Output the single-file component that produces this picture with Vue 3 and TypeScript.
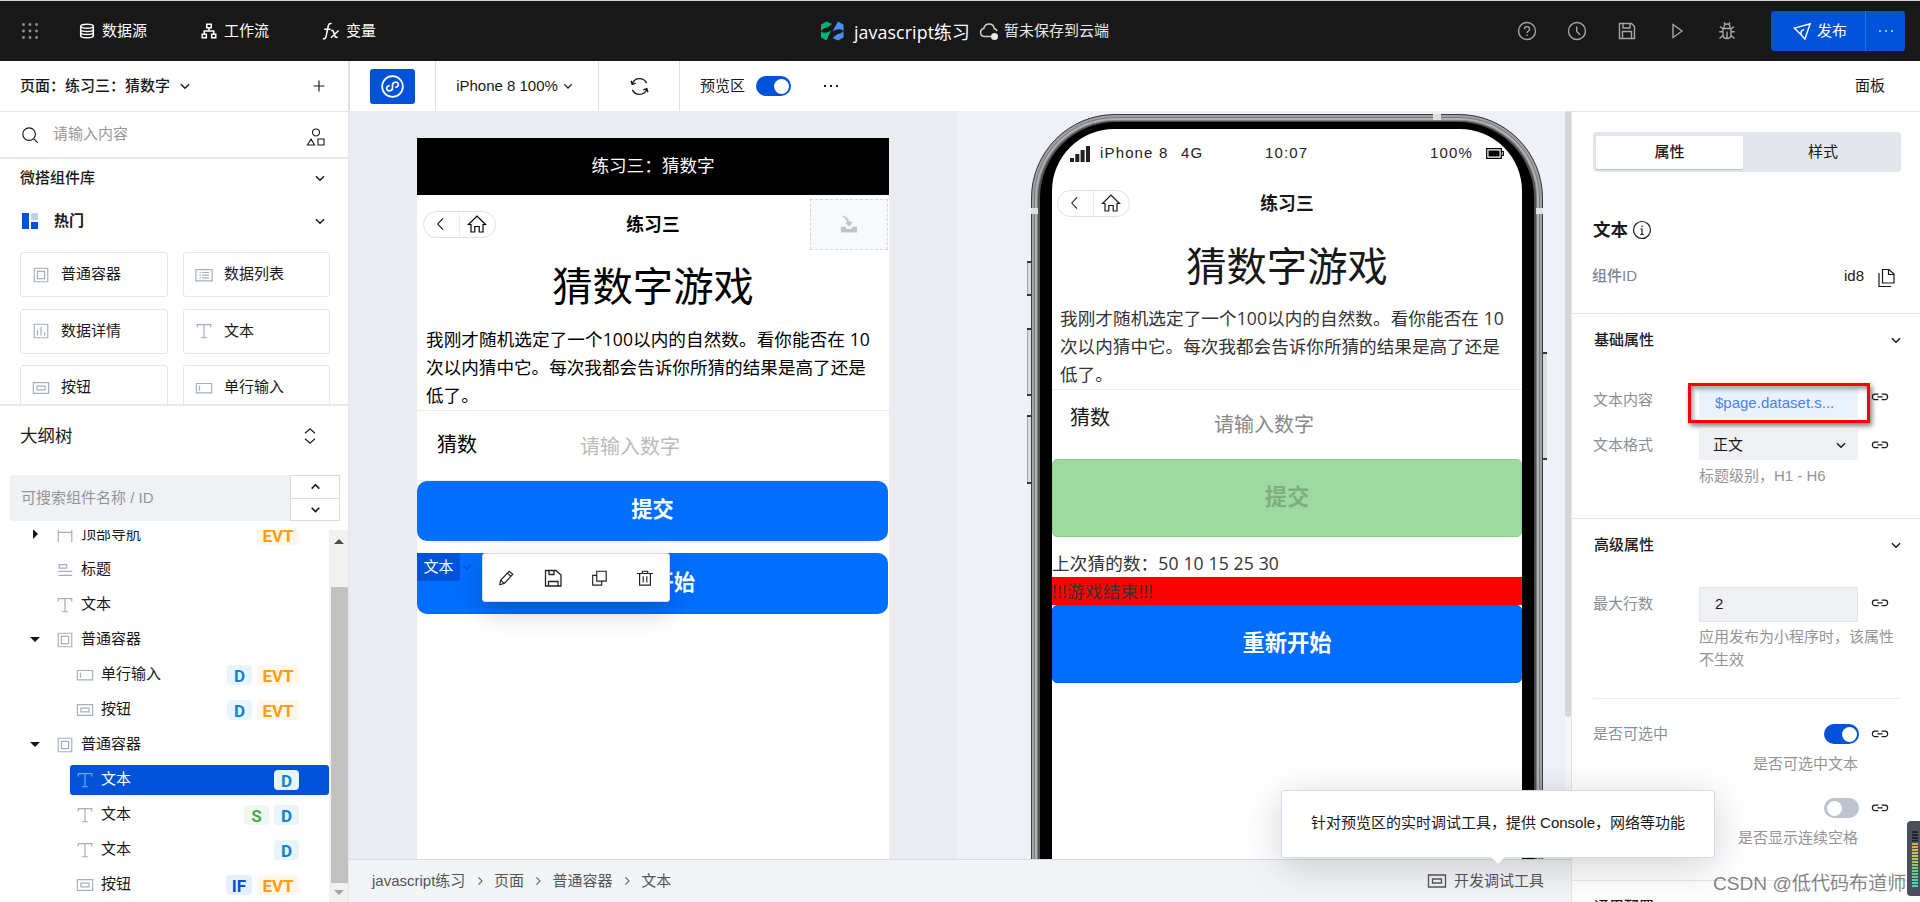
<script setup lang="ts">
import { h } from 'vue'

interface IconProps {
  name: string
  size?: number
  fill?: boolean
  stroke?: number
}

interface Badge {
  text: string
  type: 'd' | 'evt' | 's' | 'if'
}

interface TreeNode {
  label: string
  icon: string
  level: 1 | 2
  arrow?: 'right' | 'down'
  active?: boolean
  badges?: Badge[]
}

// every path is drawn on a 20x20 grid
const paths: Record<string, string> = {
  chevron: 'M5.5 8l4.5 4.5L14.5 8',
  chevronUp: 'M5.5 12.5L10 8l4.5 4.5',
  chevronRight: 'M8 5.5l4.5 4.5L8 14.5',
  plus: 'M10 4v12M4 10h12',
  search: 'M9 2a7 7 0 1 0 0 14a7 7 0 0 0 0-14M14 14l4.5 4.5',
  shapes: 'M10 2a3.5 3.5 0 1 0 0 7a3.5 3.5 0 0 0 0-7M5 12l3.6 6H1.4zM12 12h6v6h-6z',
  database: 'M10 2.5c4.5 0 7 1 7 2.2s-2.500 2.200-7 2.200s-7-1-7-2.200s2.500-2.200 7-2.200M3 4.700v10.600c0 1.300 3 2.200 7 2.200s7-.9 7-2.200V4.700M3 8.300c0 1.200 3 2.200 7 2.200s7-1 7-2.200M3 11.800c0 1.200 3 2.200 7 2.200s7-1 7-2.200',
  flow: 'M7.500 2.500h5v4h-5zM2.500 13.500h4.500v4H2.500zM13 13.500h4.500v4H13zM10 6.500V10M4.700 13.500V10h10.600v3.500',
  fx: 'M1 18.500c2.200.5 3.200-.5 3.700-3L6.800 5c.5-2.700 1.600-3.800 4-3.200M2.500 8h7M10 9.500c1.800-1 2.600 0 3.400 3.500s1.800 4.800 4 3.500M18.500 9.500L10 17.500',
  help: 'M10 1.500a8.500 8.500 0 1 0 0 17a8.500 8.500 0 0 0 0-17M7.400 8.200c0-3.600 5.200-3.400 5.200 0c0 1.700-2.600 1.900-2.600 3.900M10 13.600v1.300',
  clock: 'M10 1.500a8.500 8.500 0 1 0 0 17a8.500 8.500 0 0 0 0-17M9.700 5.500v5l3.300 3.200',
  save: 'M2.500 2.500h12l3 3v12h-15zM6 2.500v4.500h7V2.500M5.500 17.500v-7h9v7',
  saveThin: 'M2.500 2.500h10.500l5 4.500v11H2.500zM6 2.500v4h5v-4M5.500 18v-4.500h9.500V18',
  play: 'M6 3.500l9 6.500l-9 6.500z',
  bug: 'M6 7.500h8v6c0 2.500-1.700 4-4 4s-4-1.500-4-4zM7 7.500V5.700C7 4 8 3 10 3s3 1 3 2.700v1.800M10 10.500v7M2.200 10.700H6M14 10.700h3.800M2.500 17.500L6 14.500M17.500 17.500L14 14.500M3 5.500l3 2.500M17 5.500L14 8M7 1.500l1.300 1.700M13 1.500l-1.300 1.700',
  send: 'M1.500 6.500L18 2l-5.500 16l-4-4.500zM8.500 13.500V10l3-2.200',
  cloud: 'M12 15.500H5.500a4 4 0 0 1-.8-7.900C5.500 4.500 7.500 3 10 3c2.800 0 4.800 1.800 5.300 4.500c1.500.5 2.500 1.500 2.700 2.700',
  mini: 'M10 1a9 9 0 1 0 0 18a9 9 0 0 0 0-18M7.600 9.200c-2.200.3-3.100 1.800-2.500 3.300c.8 2 4.900 1.600 4.900-1.300V8.800c0-2.900 4.100-3.300 4.900-1.300c.6 1.500-.3 3-2.500 3.300',
  refresh: 'M3 7.500C4.200 4.200 6.800 2.500 10 2.500c3 0 5.500 1.700 6.800 4.300M17 12.500c-1.200 3.300-3.800 5-7 5c-3 0-5.500-1.700-6.800-4.300M2 4.500L3 8l3.400-1.300M18 15.500l-1-3.500l-3.400 1.300',
  container: 'M2.500 2.500h15v15h-15zM6 6h8v8H6z',
  list: 'M1 4h18v12.500H1zM5 7.200h1.500M8 7.200h7.500M5 10.200h1.500M8 10.200h7.500M5 13.200h1.500M8 13.200h7.500',
  chart: 'M2.500 2.500h15v15h-15zM6 9v6M10 5.500V15M14 11.500V15',
  text: 'M2.500 6V3h15v3M10 3v14.500M6.500 17.500h7',
  button: 'M1.500 4h17v12h-17zM5.500 8h9v4h-9z',
  input: 'M1.500 5h17v10.500h-17zM5 7.500v5.500',
  navbar: 'M2.500 18V4M17.500 18V4M2.500 7h15',
  title: 'M3.500 4h8.500v4H3.500zM2.500 11.500h15.500M2.500 16h15.500',
  back: 'M12.500 3l-6.500 7l6.500 7',
  home: 'M1.500 10.500L10 2l8.500 8.500h-2.500V18h-3.800v-5.500H7.800V18H4v-7.500z',
  edit: 'M3 17.500l1-5L13.500 2.500l4 3.500L8 16zM4 12.500l4 3.500M11.500 4.600l4 3.500',
  copy: 'M7.500 2.500h10.500v11H7.500zM7.500 7H3v11h10v-4.500',
  trash: 'M1 5h18M7 5V2.500h6V5M4 5v13h12V5M8 8v7M12 8v7',
  info: 'M10 1.500a8.500 8.500 0 1 0 0 17a8.500 8.500 0 0 0 0-17M10 5.500v1.500M8.500 9H10v5.500M8.300 14.500h3.500',
  files: 'M6.500 1.500h6.500l5 4.500v9H6.500zM12.500 1.500v5H18M3 5v13.500h12',
  link: 'M8.200 6.800H4.600a3 3 0 0 0 0 6.200h3.600M11.800 6.800h3.600a3 3 0 0 1 0 6.200h-3.600M7 9.900h6',
  more: 'M3 9h2v2H3zM9 9h2v2H9zM15 9h2v2h-2z',
  sort: 'M4.500 7L10 2l5.500 5M4.500 13l5.500 5l5.500-5',
  inbox: 'M1 13h5l1.500 2.500h5l1.500-2.500h5v6.500H1zM1 .5c5 .5 8.500 2.500 9.500 7h3.500L10.500 13L5.500 8.500H8C7 5 5 2.500 1 .5z',
}

const Icon = (props: IconProps) =>
  h(
    'svg',
    { width: props.size ?? 20, height: props.size ?? 20, viewBox: '0 0 20 20', class: 'icon' },
    [
      h('path', {
        d: paths[props.name],
        fill: props.fill ? 'currentColor' : 'none',
        stroke: props.fill ? 'none' : 'currentColor',
        'stroke-width': props.stroke ?? 1.3,
      }),
    ]
  )
Icon.props = { name: String, size: Number, fill: Boolean, stroke: Number }

const menus = [
  { icon: 'database', label: '数据源' },
  { icon: 'flow', label: '工作流' },
  { icon: 'fx', label: '变量' },
]

const actions = ['help', 'clock', 'save', 'play', 'bug']

const widgets = [
  { icon: 'container', label: '普通容器' },
  { icon: 'list', label: '数据列表' },
  { icon: 'chart', label: '数据详情' },
  { icon: 'text', label: '文本' },
  { icon: 'button', label: '按钮' },
  { icon: 'input', label: '单行输入' },
]

const evt: Badge = { text: 'EVT', type: 'evt' }
const data: Badge = { text: 'D', type: 'd' }

const nodes: TreeNode[] = [
  { label: '顶部导航', icon: 'navbar', level: 1, arrow: 'right', badges: [evt] },
  { label: '标题', icon: 'title', level: 1 },
  { label: '文本', icon: 'text', level: 1 },
  { label: '普通容器', icon: 'container', level: 1, arrow: 'down' },
  { label: '单行输入', icon: 'input', level: 2, badges: [data, evt] },
  { label: '按钮', icon: 'button', level: 2, badges: [data, evt] },
  { label: '普通容器', icon: 'container', level: 1, arrow: 'down' },
  { label: '文本', icon: 'text', level: 2, active: true, badges: [data] },
  { label: '文本', icon: 'text', level: 2, badges: [{ text: 'S', type: 's' }, data] },
  { label: '文本', icon: 'text', level: 2, badges: [data] },
  { label: '按钮', icon: 'button', level: 2, badges: [{ text: 'IF', type: 'if' }, evt] },
]

const intro = [
  '我刚才随机选定了一个100以内的自然数。看你能否在 10',
  '次以内猜中它。每次我都会告诉你所猜的结果是高了还是',
  '低了。',
]

const crumbs = ['javascript练习', '页面', '普通容器', '文本']
</script>

<template>
  <div class="app">
    <header class="header">
      <svg class="apps" width="18" height="18" viewBox="0 0 18 18">
        <template v-for="y in 3" :key="y">
          <circle v-for="x in 3" :key="x" :cx="x * 6.5 - 4" :cy="y * 6.5 - 4" r="1.4" />
        </template>
      </svg>
      <nav class="menus">
        <a v-for="item in menus" :key="item.label" class="menu">
          <Icon :name="item.icon" :size="18" :stroke="1.7" />
          <span>{{ item.label }}</span>
        </a>
      </nav>
      <div class="project">
        <svg width="24" height="20" viewBox="0 0 24 20">
          <path d="M1 3.500L6.500.5L12 3L7.500 6.500C5 6.500 3 8 1 10z" fill="#07b070" />
          <path d="M1 10.500c3 2 6 1.500 10-1L6.500 19.500L1 16.500z" fill="#07b070" />
          <path d="M12.500 10.500L18 .5l5.500 3v6.500c-3-2.500-6.500-2.500-11 .5z" fill="#4a8df8" />
          <path d="M12.500 17l5-4c2.500 0 4-1 6-3v6.500L18 19.500z" fill="#4a8df8" />
        </svg>
        <span class="project__name">javascript练习</span>
        <span class="cloud">
          <Icon name="cloud" :size="20" :stroke="1.5" />
          <i class="cloud__dot"></i>
        </span>
        <span class="project__state">暂未保存到云端</span>
      </div>
      <div class="actions">
        <Icon v-for="name in actions" :key="name" :name="name" :size="20" :stroke="1.4" />
      </div>
      <div class="publish">
        <button type="button" class="publish__main"><Icon name="send" :size="19" :stroke="1.5" />发布</button>
        <button type="button" class="publish__more"><Icon name="more" fill /></button>
      </div>
    </header>

    <div class="body">
      <aside class="left">
        <div class="page-bar">
          <span>页面：练习三：猜数字</span>
          <Icon name="chevron" :size="18" :stroke="1.6" />
          <Icon class="push" name="plus" :size="18" />
        </div>
        <div class="search">
          <Icon name="search" :size="18" />
          <span class="search__hint">请输入内容</span>
          <Icon class="push" name="shapes" :size="20" :stroke="1.1" />
        </div>
        <section class="library">
          <div class="library__title">
            <span>微搭组件库</span>
            <Icon name="chevron" :size="18" :stroke="1.6" />
          </div>
          <div class="library__title library__title--hot">
            <svg width="16" height="16" viewBox="0 0 16 16">
              <path d="M0 0h7v16H0z" fill="#0052d9" />
              <path d="M9 0h7v7H9z" fill="#bbd3fb" />
              <path d="M9 9h7v7H9z" fill="#0052d9" />
            </svg>
            <span class="hot">热门</span>
            <Icon name="chevron" :size="18" :stroke="1.6" />
          </div>
          <div class="widgets">
            <div v-for="item in widgets" :key="item.label" class="widget">
              <Icon :name="item.icon" :size="18" />
              <span>{{ item.label }}</span>
            </div>
          </div>
        </section>
        <section class="outline">
          <div class="outline__head">
            <span>大纲树</span>
            <Icon name="sort" :size="18" />
          </div>
          <div class="outline__search">
            <div class="outline__input">可搜索组件名称 / ID</div>
            <div class="stepper">
              <span><Icon name="chevronUp" :size="17" :stroke="1.9" /></span>
              <span><Icon name="chevron" :size="17" :stroke="1.9" /></span>
            </div>
          </div>
          <div class="tree-wrap">
            <div class="tree">
              <div
                v-for="(node, i) in nodes"
                :key="i"
                class="node"
                :class="[`node--${node.level}`, { 'node--active': node.active }]"
              >
                <i v-if="node.level === 1" class="arrow" :class="node.arrow && `arrow--${node.arrow}`"></i>
                <div class="node__box">
                  <Icon :name="node.icon" :size="18" />
                  <span class="node__label">{{ node.label }}</span>
                  <span v-for="b in node.badges" :key="b.text" class="badge" :class="`badge--${b.type}`">{{ b.text }}</span>
                </div>
              </div>
            </div>
            <div class="scroll">
              <i class="scroll__up"></i>
              <i class="scroll__thumb"></i>
              <i class="scroll__down"></i>
            </div>
          </div>
        </section>
      </aside>

      <main class="main">
        <div class="toolbar">
          <div class="toolbar__cell toolbar__cell--mini">
            <span class="mini"><Icon name="mini" :size="23" :stroke="1.5" /></span>
          </div>
          <div class="toolbar__cell toolbar__cell--device">
            <span>iPhone 8 100%</span>
            <Icon name="chevron" :size="16" :stroke="1.6" />
          </div>
          <div class="toolbar__cell toolbar__cell--refresh"><Icon name="refresh" :size="21" /></div>
          <div class="toolbar__cell toolbar__cell--preview">
            <span>预览区</span>
            <i class="switch switch--on"></i>
            <Icon name="more" :size="20" fill />
          </div>
        </div>

        <div class="stage">
          <div class="editor">
            <div class="page">
              <div class="page__bar">练习三：猜数字</div>
              <div class="nav">
                <span class="pill"><i><Icon name="back" :size="16" /></i><i><Icon name="home" :size="20" :stroke="1.2" /></i></span>
                <b class="nav__title">练习三</b>
                <span class="drop"><Icon name="inbox" :size="18" fill /></span>
              </div>
              <h1 class="heading">猜数字游戏</h1>
              <p class="intro"><span v-for="line in intro" :key="line">{{ line }}</span></p>
              <div class="field">
                <span class="field__label">猜数</span>
                <span class="field__hint">请输入数字</span>
              </div>
              <div class="btn">提交</div>
              <div class="btn btn--last">
                重新开始
                <span class="tag">文本</span>
                <Icon class="tag-arrow" name="chevron" :size="18" :stroke="1.4" />
                <div class="popbar">
                  <Icon name="edit" :size="18" />
                  <Icon name="saveThin" :size="20" />
                  <Icon name="copy" :size="18" />
                  <Icon name="trash" :size="18" />
                </div>
              </div>
            </div>
          </div>

          <div class="preview">
            <div class="phone">
              <i class="key key--mute"></i>
              <i class="key key--up"></i>
              <i class="key key--down"></i>
              <i class="key key--power"></i>
              <i class="seam seam--top"></i>
              <i class="seam seam--left"></i>
              <i class="seam seam--right"></i>
              <div class="phone__bezel">
                <div class="phone__screen">
                  <div class="status">
                    <svg width="20" height="16" viewBox="0 0 20 16">
                      <path d="M0 12h4v4H0zM5.300 8h4v8h-4zM10.600 4h4v12h-4zM16 0h4v16h-4z" fill="#222" />
                    </svg>
                    <span class="status__name">iPhone 8</span>
                    <span class="status__net">4G</span>
                    <span class="status__time">10:07</span>
                    <span>100%</span>
                    <svg width="18" height="11" viewBox="0 0 18 11">
                      <path d="M.7.7h14.600v9.600H.7zM15.500 3.500h1.800v4h-1.800" fill="none" stroke="#000" stroke-width="1.2" />
                      <path d="M2.500 2.500h11v6h-11z" />
                    </svg>
                  </div>
                  <div class="nav nav--phone">
                    <span class="pill"><i><Icon name="back" :size="16" /></i><i><Icon name="home" :size="20" :stroke="1.2" /></i></span>
                    <b class="nav__title">练习三</b>
                  </div>
                  <h1 class="heading heading--phone">猜数字游戏</h1>
                  <p class="intro intro--phone"><span v-for="line in intro" :key="line">{{ line }}</span></p>
                  <div class="field field--phone">
                    <span class="field__label">猜数</span>
                    <span class="field__hint">请输入数字</span>
                  </div>
                  <div class="btn btn--phone btn--disabled">提交</div>
                  <div class="guesses">上次猜的数：50 10 15 25 30</div>
                  <div class="over">!!!游戏结束!!!</div>
                  <div class="btn btn--phone">重新开始</div>
                </div>
              </div>
            </div>
          </div>
          <div class="stage__scroll"><i></i></div>
        </div>

        <footer class="footer">
          <template v-for="(crumb, i) in crumbs" :key="crumb">
            <Icon v-if="i" class="crumb-sep" name="chevronRight" :size="16" />
            <span>{{ crumb }}</span>
          </template>
          <span class="devtool"><Icon name="button" :size="20" />开发调试工具</span>
        </footer>
        <div class="tooltip">针对预览区的实时调试工具，提供 Console，网络等功能</div>
      </main>

      <aside class="right">
        <div class="right__bar">面板</div>
        <div class="tabs">
          <span class="tab tab--on">属性</span>
          <span class="tab">样式</span>
        </div>
        <div class="comp">
          <b>文本</b>
          <Icon name="info" :size="20" :stroke="1.2" />
        </div>
        <div class="comp-id">
          <b>组件ID</b>
          <span>id8</span>
          <Icon name="files" :size="20" :stroke="1.2" />
        </div>

        <section class="group group--base">
          <div class="group__title">基础属性<Icon name="chevron" :size="18" :stroke="1.6" /></div>
          <div class="row row--content">
            <span class="row__label">文本内容</span>
            <span class="bind">$page.dataset.s...<i class="bind__mark"></i></span>
            <Icon class="row__link" name="link" :size="18" />
          </div>
          <div class="row row--format">
            <span class="row__label">文本格式</span>
            <span class="select">正文<Icon name="chevron" :size="18" :stroke="1.6" /></span>
            <Icon name="link" :size="18" />
          </div>
          <p class="tip">标题级别，H1 - H6</p>
        </section>

        <section class="group group--adv">
          <div class="group__title">高级属性<Icon name="chevron" :size="18" :stroke="1.6" /></div>
          <div class="row row--lines">
            <span class="row__label">最大行数</span>
            <span class="input">2</span>
            <Icon class="row__link" name="link" :size="18" />
          </div>
          <p class="tip">应用发布为小程序时，该属性<br />不生效</p>
          <hr class="rule" />
          <div class="row row--switch">
            <span class="row__label row__label--wide">是否可选中</span>
            <i class="switch switch--on"></i>
            <Icon name="link" :size="18" />
          </div>
          <p class="tip tip--right">是否可选中文本</p>
          <div class="row row--switch row--second">
            <span class="row__label row__label--wide"></span>
            <i class="switch"></i>
            <Icon name="link" :size="18" />
          </div>
          <p class="tip tip--right">是否显示连续空格</p>
        </section>

        <section class="group group--common">
          <div class="group__title">通用配置<Icon name="chevron" :size="18" :stroke="1.6" /></div>
        </section>
      </aside>
    </div>

    <div class="watermark">CSDN @低代码布道师</div>
    <div class="meter"><i class="meter__scale"></i></div>
  </div>
</template>

<style>
body {
  margin: 0;
  overflow: hidden;
}
</style>

<style scoped>
.app,
.app * {
  box-sizing: border-box;
}

.app {
  position: relative;
  width: 1920px;
  height: 902px;
  overflow: hidden;
  display: flex;
  flex-direction: column;
  border-top: 1px solid #d3d8d6;
  background: #fff;
  color: #181818;
  font: 15px/1.5 'Liberation Sans', 'Noto Sans CJK SC', sans-serif;
  white-space: nowrap;
}

.icon {
  flex: none;
  display: block;
}

.push {
  margin-left: auto;
}

button {
  border: 0;
  padding: 0;
  font: inherit;
  color: inherit;
  background: none;
}

/* header */
.header {
  flex: none;
  height: 60px;
  display: flex;
  align-items: center;
  background: #181818;
  color: #fff;
}

.apps {
  margin-left: 21px;
  fill: #8f8f8f;
}

.menus {
  display: flex;
  margin-left: 39px;
  width: 742px;
}

.menu {
  width: 122px;
  display: flex;
  align-items: center;
  gap: 6px;
}

.project {
  display: flex;
  align-items: center;
  width: 697px;
}

.project__name {
  width: 125px;
  margin-left: 10px;
  font: 17.800px 'Open Sans', 'Noto Sans CJK SC', sans-serif;
  letter-spacing: 0.1px;
}

.project__state {
  margin-left: 5px;
  color: #e8e8e8;
}

.cloud {
  position: relative;
  color: #cfcfcf;
}

.cloud__dot {
  position: absolute;
  right: 1px;
  bottom: 1px;
  width: 7px;
  height: 7px;
  border-radius: 50%;
  background: #e8e8e8;
}

.actions {
  display: flex;
  gap: 30px;
  width: 254px;
  color: #a5a5a5;
}

.publish {
  display: flex;
  height: 40px;
  width: 134px;
  border-radius: 3px;
  background: #0052d9;
}

.publish__main {
  flex: 1;
  display: flex;
  align-items: center;
  justify-content: center;
  gap: 5px;
  padding-left: 4px;
}

.publish__more {
  width: 40px;
  display: flex;
  align-items: center;
  justify-content: center;
  border-left: 1px solid #266fe8;
  color: #9dbef5;
}

/* left column */
.body {
  flex: 1;
  min-height: 0;
  display: flex;
}

.left {
  flex: none;
  width: 349px;
  display: flex;
  flex-direction: column;
  border-right: 1px solid #e3e6eb;
}

.page-bar {
  flex: none;
  height: 51px;
  display: flex;
  align-items: center;
  padding: 0 20px;
  gap: 6px;
  border-bottom: 1px solid #e3e6eb;
  font-weight: 500;
}

.search {
  flex: none;
  height: 47px;
  display: flex;
  align-items: center;
  padding: 0 22px 0 21px;
  border-bottom: 2px solid #e3e6eb;
}

.search__hint {
  margin-left: 14px;
  color: #999;
}

.search .push {
  margin-top: 4px;
}

.library {
  flex: none;
  height: 247px;
  overflow: hidden;
  border-bottom: 2px solid #e7e7e7;
}

.library__title {
  height: 38px;
  display: flex;
  align-items: center;
  justify-content: space-between;
  padding: 0 19px 0 20px;
  font-weight: 500;
}

.library__title--hot {
  height: 48px;
  padding-left: 22px;
}

.hot {
  flex: 1;
  margin-left: 16px;
  font-weight: 700;
}

.widgets {
  display: grid;
  grid-template-columns: 148px 147px;
  grid-auto-rows: 45px;
  gap: 11.500px 15px;
  padding: 7px 0 0 20px;
}

.widget {
  display: flex;
  align-items: center;
  gap: 11px;
  padding-left: 11px;
  border: 1px solid #e3e6eb;
  border-radius: 3px;
}

.widget .icon,
.node .icon {
  color: #a3aec0;
}

.outline {
  flex: 1;
  min-height: 0;
  display: flex;
  flex-direction: column;
}

.outline__head {
  height: 60px;
  display: flex;
  align-items: center;
  justify-content: space-between;
  padding: 0 29px 0 20px;
  font-size: 17.500px;
}

.outline__search {
  margin: 9px 8px 0 10px;
  display: flex;
  height: 46px;
}

.outline__input {
  width: 280px;
  display: flex;
  align-items: center;
  padding-left: 11px;
  border-radius: 3px 0 0 3px;
  background: #f0f1f5;
  color: #949494;
}

.stepper {
  width: 50px;
  display: flex;
  flex-direction: column;
  border: 1px solid #dcdcdc;
}

.stepper span {
  flex: 1;
  display: flex;
  align-items: center;
  justify-content: center;
}

.stepper span + span {
  border-top: 1px solid #dcdcdc;
}

.tree-wrap {
  flex: 1;
  min-height: 0;
  margin-top: 9px;
  display: flex;
}

.tree {
  width: 329px;
  overflow: hidden;
}

.node {
  height: 35px;
  display: flex;
  align-items: center;
}

.node:first-child {
  margin-top: -13px;
}

.node--1 {
  padding-left: 30px;
}

.node--2 {
  padding-left: 70px;
}

.node__box {
  flex: 1;
  height: 30px;
  display: flex;
  align-items: center;
  padding: 0 30px 0 6px;
  border-radius: 3px;
}

.node--1 .node__box {
  padding-left: 12px;
}

.node--active .node__box {
  background: #0052d9;
  color: #fff;
}

.node--active .icon {
  color: #7ea6ea;
}

.node__label {
  flex: 1;
  margin-left: 7px;
}

.arrow {
  width: 14px;
  height: 12px;
}

.arrow--down::before,
.arrow--right::before {
  content: '';
  display: block;
  width: 0;
  border: 5px solid transparent;
}

.arrow--down::before {
  margin-top: 3px;
  border-top-color: #181818;
  border-bottom: 0;
}

.arrow--right::before {
  margin-left: 3px;
  border-left-color: #181818;
  border-right: 0;
}

.badge {
  height: 20px;
  min-width: 25px;
  margin-left: 5px;
  padding: 0 6px;
  border-radius: 4px;
  text-align: center;
  font: 700 17px/23px Roboto, sans-serif;
}

.badge--d {
  background: #e9f5fd;
  color: #0a87cf;
}

.badge--evt {
  min-width: 42px;
  padding: 0 5px;
  background: #fff7ea;
  color: #ff9d0a;
}

.badge--s {
  background: #eff8f0;
  color: #3fae49;
}

.badge--if {
  background: #e8f0fe;
  color: #0052d9;
}

.scroll {
  width: 19px;
  display: flex;
  flex-direction: column;
  align-items: center;
  background: #f1f1f1;
}

.scroll__up {
  margin-top: 9px;
  border: 5px solid transparent;
  border-top: 0;
  border-bottom-color: #505050;
}

.scroll__thumb {
  width: 17px;
  height: 296px;
  margin: 43px 0 7px 2px;
  background: #c1c1c1;
}

.scroll__down {
  border: 5px solid transparent;
  border-bottom: 0;
  border-top-color: #a3a3a3;
}

/* center column */
.main {
  position: relative;
  flex: none;
  width: 1222px;
  display: flex;
  flex-direction: column;
}

.toolbar {
  flex: none;
  height: 50px;
  display: flex;
}

.toolbar__cell {
  display: flex;
  align-items: center;
  justify-content: center;
  border-left: 1px solid #dcdfe6;
}

.toolbar__cell--mini {
  width: 86px;
}

.toolbar__cell--device {
  width: 163px;
  padding-right: 2px;
  gap: 2px;
}

.toolbar__cell--refresh {
  width: 81px;
}

.toolbar__cell--preview {
  padding-left: 20px;
}

.toolbar__cell--preview .switch {
  margin: 0 30px 0 11px;
}

.mini {
  width: 45px;
  height: 35px;
  display: flex;
  align-items: center;
  justify-content: center;
  border-radius: 3px;
  background: #0052d9;
  color: #fff;
}

.switch {
  flex: none;
  display: block;
  width: 35px;
  height: 20px;
  padding: 2.500px;
  border-radius: 10px;
  background: #bbc3d0;
}

.switch::before {
  content: '';
  display: block;
  width: 15px;
  height: 15px;
  border-radius: 50%;
  background: #fff;
}

.switch--on {
  background: #0052d9;
}

.switch--on::before {
  margin-left: auto;
}

.stage {
  height: 748px;
  display: flex;
}

.editor {
  width: 608px;
  padding: 27px 0 0 68px;
  background: #ebecf1;
}

.page {
  width: 472px;
  height: 721px;
  background: #fff;
  color: #000;
}

.page__bar {
  height: 57px;
  display: flex;
  align-items: center;
  justify-content: center;
  background: #000;
  color: #fff;
  font-size: 17.600px;
}

.nav {
  height: 58px;
  display: grid;
  grid-template-columns: 1fr auto 1fr;
  align-items: center;
  padding: 0 1px 0 6px;
}

.nav__title {
  margin: 2px 5px 0 0;
  font-size: 17.800px;
}

.pill {
  width: 73px;
  height: 27px;
  display: flex;
  border: 1px solid #dfdfdf;
  border-radius: 14px;
}

.pill i {
  flex: 1;
  display: flex;
  align-items: center;
  justify-content: center;
}

.pill i + i {
  padding-right: 1px;
  border-left: 1px solid #ececec;
}

.drop {
  justify-self: end;
  width: 78px;
  height: 51px;
  display: flex;
  align-items: center;
  justify-content: center;
  border: 1px dashed #d5d8de;
  background: #f8f9fb;
  color: #bcc4d1;
}

.heading {
  height: 72px;
  margin: 0;
  text-align: center;
  font: 400 40.300px/62px 'Noto Sans CJK SC', sans-serif;
}

.intro {
  margin: 0;
  padding-left: 9px;
  height: 85px;
  font: 17.600px/28px 'Open Sans', 'Noto Sans CJK SC', sans-serif;
}

.intro span {
  display: block;
}

.intro span:first-child {
  letter-spacing: 0.07px;
}

.field {
  height: 71px;
  display: flex;
  align-items: center;
  border: solid #ededed;
  border-width: 1px 0;
  padding-left: 20px;
  font-size: 20px;
}

.field__label {
  width: 143px;
  margin-top: -2px;
}

.field__hint {
  margin-top: 2px;
  color: #bbb;
}

.btn {
  position: relative;
  width: 471px;
  height: 60px;
  display: flex;
  align-items: center;
  justify-content: center;
  border-radius: 10px;
  background: #006eff;
  color: #fff;
  font-size: 21.300px;
  font-weight: 700;
}

.btn--last {
  height: 61px;
  margin-top: 12px;
}

.tag {
  position: absolute;
  left: 0;
  top: 0;
  width: 43px;
  height: 28px;
  border-radius: 0 0 3px;
  background: #0052d9;
  font-size: 15px;
  font-weight: 400;
  line-height: 27px;
  text-align: center;
}

.tag-arrow {
  position: absolute;
  left: 41px;
  top: 5px;
  color: #0052d9;
}

.popbar {
  position: absolute;
  left: 65px;
  top: 0;
  width: 188px;
  height: 49px;
  display: flex;
  align-items: center;
  justify-content: space-between;
  padding: 0 15px 0 14px;
  border: 1px solid #d9dde8;
  border-radius: 3px;
  background: #fff;
  color: #222;
  box-shadow: 0 10px 26px rgba(0, 0, 0, 0.2);
}

.preview {
  width: 608px;
  height: 748px;
  padding: 3px 0 0 74px;
  overflow: hidden;
  background: #f0f1f6;
}

.phone {
  position: relative;
  width: 512px;
  height: 900px;
  padding: 7px 8px 0;
  border: 1px solid #3b3d48;
  border-radius: 84px 84px 0 0;
  background: #4f4f4f;
  box-shadow: inset 0 0 0 2px #a0a0a3, inset 0 0 0 3px #7c7c7e, inset 0 0 0 5px #b0b0b2, inset 0 0 0 6px #7f7f80;
}

.phone__bezel {
  height: 100%;
  padding: 7px 12px 0;
  border-radius: 76px 76px 0 0;
  background: #000;
}

.phone__screen {
  height: 100%;
  border-radius: 62px 62px 0 0;
  background: #fff;
}

.seam,
.key {
  position: absolute;
}

.seam {
  background: #dfe1de;
}

.seam--top {
  left: 401px;
  top: -1px;
  width: 8px;
  height: 6px;
}

.seam--left,
.seam--right {
  top: 93px;
  width: 7px;
  height: 6px;
}

.seam--left {
  left: -1px;
}

.seam--right {
  right: -1px;
}

.key {
  left: -5px;
  width: 4px;
  border: solid #33343c;
  border-width: 2px 0;
  background: linear-gradient(90deg, #a4a5ab 1px, #dcdde0 1px);
}

.key--mute {
  top: 146px;
  height: 35px;
}

.key--up {
  top: 213px;
  height: 68px;
}

.key--down {
  top: 300px;
  height: 69px;
}

.key--power {
  left: auto;
  right: -5px;
  top: 237px;
  height: 108px;
  background: #dcdde0;
}

.status {
  height: 49px;
  display: flex;
  align-items: center;
  padding: 0 18px;
  color: #222;
  letter-spacing: 1.150px;
}

.status__name {
  margin-left: 10px;
  width: 81px;
}

.status__net {
  width: 84px;
}

.status__time {
  width: 165px;
}

.status svg:last-child {
  margin-left: auto;
}

.nav--phone {
  height: 50px;
  padding: 0 5px;
}

.nav--phone .nav__title {
  margin: 3px 0 0;
}

.heading--phone {
  height: 76px;
  line-height: 71px;
}

.intro--phone {
  padding-left: 8px;
  color: #333;
}

.field--phone {
  height: 70px;
  padding-left: 18px;
  border-bottom: 0;
  align-items: flex-start;
}

.field--phone .field__label {
  width: 144px;
  margin-top: 13px;
}

.field--phone .field__hint {
  margin-top: 20px;
  color: #888;
}

.btn--phone {
  width: 470px;
  height: 78px;
  border: 1px solid #0064e8;
  border-radius: 5px;
  font-size: 22.300px;
}

.btn--disabled {
  border-color: #8fca8f;
  background: #9eda9f;
  color: #7eae7f;
}

.guesses,
.over {
  height: 28px;
  font: 17.600px/28px 'Open Sans', 'Noto Sans CJK SC', sans-serif;
  color: #333;
}

.guesses {
  margin-top: 12px;
  letter-spacing: 0.13px;
}

.over {
  background: #f00;
  letter-spacing: 0.3px;
}

.stage__scroll {
  width: 6px;
  background: #f7f7f9;
}

.stage__scroll i {
  display: block;
  height: 606px;
  border-radius: 3px;
  background: #d5d5d5;
}

.footer {
  height: 43px;
  display: flex;
  align-items: center;
  padding: 0 27px 0 23px;
  border-top: 1px solid #d5dae5;
  background: #f3f4f6;
  color: #555;
}

.crumb-sep {
  margin: 0 6.300px;
}

.devtool {
  margin-left: auto;
  display: flex;
  align-items: center;
  gap: 7px;
}

.tooltip {
  position: absolute;
  z-index: 2;
  left: 932px;
  top: 729px;
  width: 434px;
  height: 68px;
  border: 1px solid #d5d9e8;
  border-radius: 3px;
  background: #fff;
  text-align: center;
  line-height: 64px;
  box-shadow: 0 8px 40px rgba(0, 0, 0, 0.18);
}

.tooltip::after {
  content: '';
  position: absolute;
  left: 209px;
  top: 66px;
  border: 7px solid transparent;
  border-top-color: #fff;
  border-bottom: 0;
}

/* right column */
.right {
  flex: 1;
  min-height: 0;
  display: flex;
  flex-direction: column;
  border-left: 1px solid #e3e6eb;
}

.right > * {
  flex: none;
}

.right__bar {
  height: 51px;
  margin-left: -6px;
  padding: 14px 35px 0 0;
  border-bottom: 1px solid #e3e6eb;
  background: #fff;
  text-align: right;
}

.tabs {
  display: flex;
  width: 308px;
  height: 40px;
  margin: 20px 0 0 21px;
  padding: 4px 0 3px 3px;
  border-radius: 4px;
  background: #e3e6eb;
}

.tab {
  flex: 1;
  display: flex;
  align-items: center;
  justify-content: center;
  padding-left: 2px;
}

.tab--on {
  flex: none;
  width: 147px;
  padding-left: 0;
  border-radius: 2px;
  background: #fff;
  box-shadow: 0 1px 1px #b8c0cc;
  font-weight: 500;
}

.comp {
  display: flex;
  align-items: center;
  gap: 4px;
  height: 30px;
  margin: 43px 0 0 21px;
  font-size: 17.500px;
}

.comp-id {
  display: flex;
  align-items: center;
  height: 30px;
  margin: 16px 24px 0 20px;
}

.comp-id b {
  flex: 1;
  font-weight: 500;
  color: #7d8694;
}

.comp-id .icon {
  margin: 4px 0 0 12px;
}

.group {
  border-top: 1px solid #e3e6eb;
  padding: 0 19px 0 21px;
}

.group--base {
  height: 205px;
  margin-top: 22px;
}

.group--adv {
  height: 362px;
}

.group__title {
  height: 52px;
  display: flex;
  align-items: center;
  justify-content: space-between;
  margin-right: -4px;
  padding-left: 1px;
  font-weight: 500;
}

.row {
  display: flex;
  align-items: center;
  height: 30px;
}

.row > .icon {
  margin-left: 13px;
}

.row--content {
  height: 40px;
  margin-top: 17px;
}

.row--content .row__link {
  margin-bottom: 12px;
}

.row--content .row__label {
  margin-top: -6px;
}

.row--lines .row__link {
  margin-bottom: 4px;
}

.row--format {
  margin-top: 7px;
}

.row--lines {
  height: 35px;
  margin-top: 16px;
}

.row--switch {
  height: 20px;
  margin-top: 25px;
}

.row--switch.row--second {
  margin-top: 23px;
}

.row--switch .switch {
  margin-right: -1px;
}

.row__label {
  width: 106px;
  color: #888f9a;
}

.row__label--wide {
  width: 231px;
}

.bind,
.select,
.input {
  flex: none;
  width: 159px;
  height: 30px;
  display: flex;
  align-items: center;
  padding-left: 14px;
  background: #f0f1f5;
}

.bind {
  position: relative;
  padding-left: 16px;
  background: linear-gradient(90deg, #ebf2ff 153px, #f0f1f5 153px);
  color: #4a80f0;
}

.bind__mark {
  position: absolute;
  left: -11px;
  top: -5px;
  width: 182px;
  height: 40px;
  border: 3px solid #f00;
  box-shadow: 2px 3px 5px rgba(0, 0, 0, 0.5), inset 2px 3px 5px rgba(0, 0, 0, 0.4);
}

.select {
  justify-content: space-between;
  padding-right: 8px;
}

.input {
  height: 35px;
  padding-left: 15px;
  border: 1px solid #e3e6eb;
}

.tip {
  margin: 4px 0 0 106px;
  line-height: 23px;
  color: #949494;
}

.group--adv .tip {
  position: relative;
  top: -1px;
}

.tip--right {
  margin: 9px 43px 0 0;
  text-align: right;
}

.row--switch.row--second {
  margin-top: 22px;
}

.rule {
  margin: 26px 0 0;
  border: 0;
  border-top: 1px solid #ebedf1;
}

.watermark {
  position: absolute;
  left: 1713px;
  top: 869px;
  color: rgba(90, 90, 90, 0.75);
  font-size: 19.100px;
}

.meter {
  position: absolute;
  left: 1907px;
  top: 820px;
  width: 16px;
  height: 75px;
  padding: 9px 5px;
  border-radius: 4px;
  background: #4c4f5b;
}

.meter__scale {
  display: block;
  height: 57px;
  background: repeating-linear-gradient(#4c4f5b 0 1px, transparent 1px 3px),
    linear-gradient(#22242c 20%, #d9a253 21%, #c8c84e 45%, #58d08c 75%, #4fd0c8);
}
</style>
